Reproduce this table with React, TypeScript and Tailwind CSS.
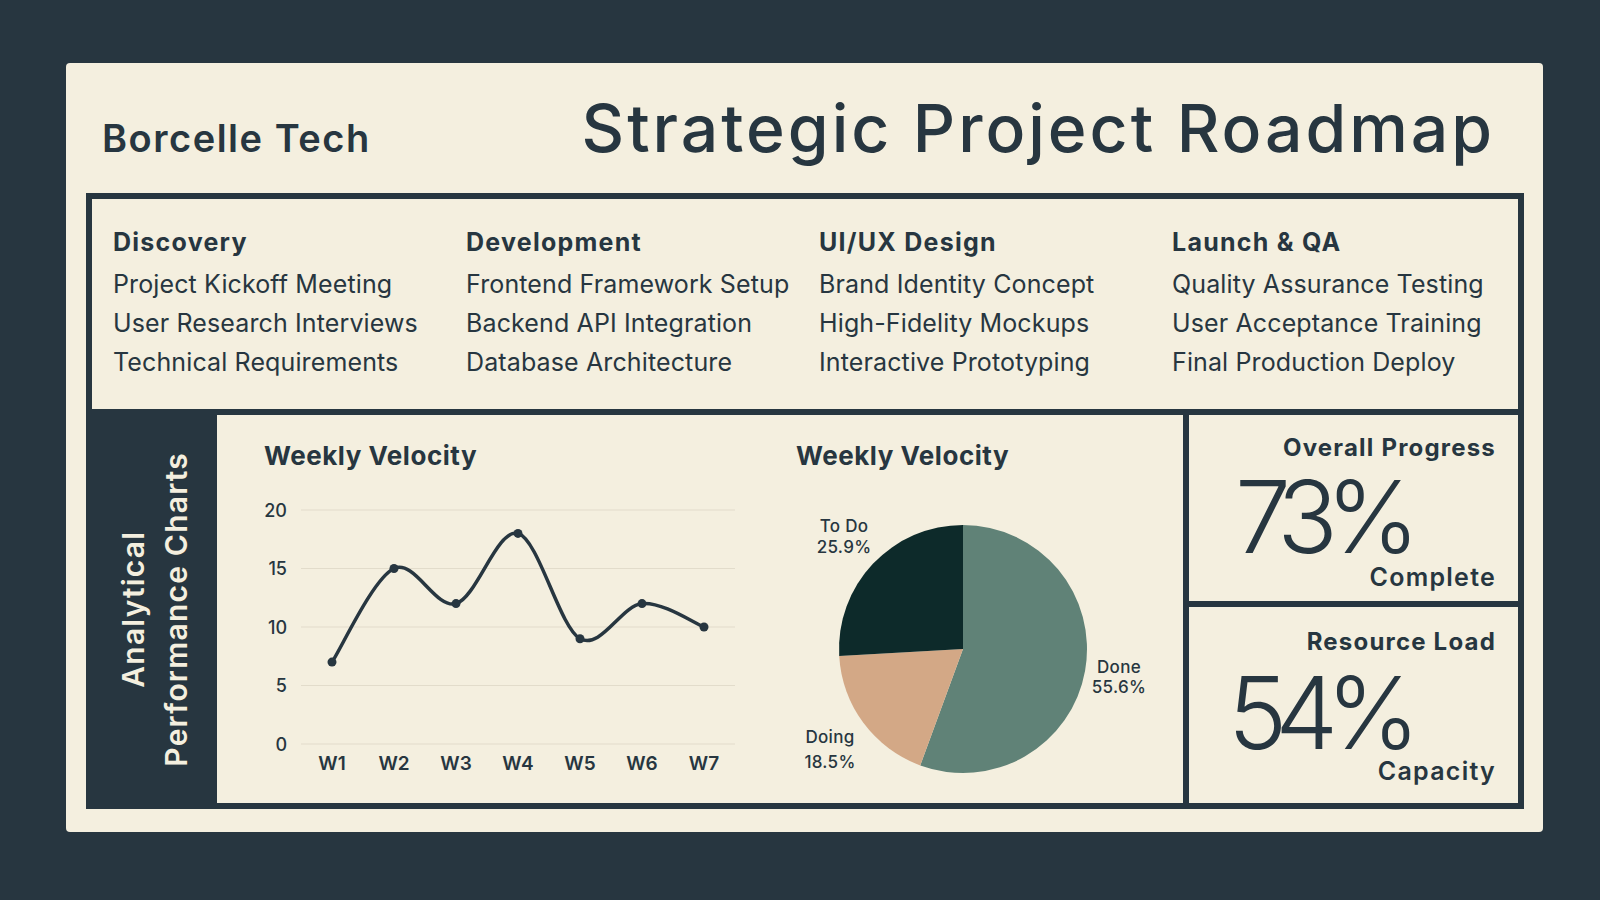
import React from "react";

const phases = [
  { title: "Discovery", items: ["Project Kickoff Meeting", "User Research Interviews", "Technical Requirements"] },
  { title: "Development", items: ["Frontend Framework Setup", "Backend API Integration", "Database Architecture"] },
  { title: "UI/UX Design", items: ["Brand Identity Concept", "High-Fidelity Mockups", "Interactive Prototyping"] },
  { title: "Launch & QA", items: ["Quality Assurance Testing", "User Acceptance Training", "Final Production Deploy"] },
];

const velocity = [7, 15, 12, 18, 9, 12, 10];
const weeks = ["W1", "W2", "W3", "W4", "W5", "W6", "W7"];

const px = (i: number) => 68 + 62 * i;
const py = (v: number) => 254 - v * 11.7;

// catmull-rom -> cubic bezier
function smoothPath(pts: [number, number][]) {
  let d = `M${pts[0][0]},${pts[0][1]}`;
  for (let i = 0; i < pts.length - 1; i++) {
    const p0 = pts[i - 1] || pts[i];
    const p1 = pts[i];
    const p2 = pts[i + 1];
    const p3 = pts[i + 2] || p2;
    const c1x = p1[0] + (p2[0] - p0[0]) / 6;
    const c1y = p1[1] + (p2[1] - p0[1]) / 6;
    const c2x = p2[0] - (p3[0] - p1[0]) / 6;
    const c2y = p2[1] - (p3[1] - p1[1]) / 6;
    d += ` C${c1x.toFixed(1)},${c1y.toFixed(1)} ${c2x.toFixed(1)},${c2y.toFixed(1)} ${p2[0]},${p2[1].toFixed(1)}`;
  }
  return d;
}

function LineChart() {
  const pts = velocity.map((v, i) => [px(i), py(v)] as [number, number]);
  return (
    <svg width="480" height="290" className="mt-[18px] block" style={{ fontFamily: "Inter, sans-serif" }}>
      {[0, 5, 10, 15, 20].map((t) => (
        <g key={t}>
          <line x1="37" x2="471" y1={py(t)} y2={py(t)} stroke="#e2dccb" strokeWidth="1.2" />
          <text x="23" y={py(t)} textAnchor="end" dominantBaseline="central" fontSize="18" fontWeight="500" fill="#273640">
            {t}
          </text>
        </g>
      ))}
      {weeks.map((w, i) => (
        <text key={w} x={px(i)} y="273" textAnchor="middle" dominantBaseline="central" fontSize="19" fontWeight="600" fill="#273640">
          {w}
        </text>
      ))}
      <path d={smoothPath(pts)} fill="none" stroke="#273640" strokeWidth="3.5" strokeLinecap="round" />
      {pts.map(([x, y], i) => (
        <circle key={i} cx={x} cy={y} r="4.5" fill="#273640" />
      ))}
    </svg>
  );
}

function PieChart() {
  return (
    <svg width="360" height="290" className="mt-[18px] -ml-[6px] block" style={{ fontFamily: "Inter, sans-serif" }}>
      <path d="M173,159 L173,35 A124,124 0 1 1 130.26,275.4 Z" fill="#608277" />
      <path d="M173,159 L130.26,275.4 A124,124 0 0 1 49.2,166.01 Z" fill="#d3a886" />
      <path d="M173,159 L49.2,166.01 A124,124 0 0 1 173,35 Z" fill="#0d2a2a" />
      <g fontSize="17" fontWeight="500" fill="#273640" textAnchor="middle" dominantBaseline="central" letterSpacing="0.3">
        <text x="54" y="36">To Do</text>
        <text x="54" y="57">25.9%</text>
        <text x="329" y="177">Done</text>
        <text x="329" y="197">55.6%</text>
        <text x="40" y="247">Doing</text>
        <text x="40" y="272">18.5%</text>
      </g>
    </svg>
  );
}

type StatProps = {
  title: string;
  value: string;
  label: string;
  box: string;
  pl: string;
  numMt: string;
  labelMt: string;
};

function Stat({ title, value, label, box, pl, numMt, labelMt }: StatProps) {
  return (
    <div className={`flex flex-col bg-[#f4efdf] pr-[22px] ${box}`}>
      <div className="text-right text-[24px] leading-[30px] font-bold tracking-[0.05em] text-[#273640]">{title}</div>
      <div className={`${pl} ${numMt} text-[100px] leading-[80px] font-light tracking-[-0.12em] text-[#273640]`}>{value}</div>
      <div className={`${labelMt} text-right text-[25px] leading-[30px] font-semibold tracking-[0.05em] text-[#273640]`}>{label}</div>
    </div>
  );
}

export default function App() {
  return (
    <div
      className="w-[1600px] h-[900px] bg-[#273640] pl-[66px] pt-[63px] overflow-hidden"
      style={{ fontFamily: "Inter, 'Open Sans', sans-serif" }}
    >
      <div className="w-[1477px] h-[769px] rounded-[4px] bg-[#f4efdf] text-[#273640]">
        {/* header */}
        <div className="h-[130px] flex items-baseline justify-between pl-[36px] pr-[48px] pt-[32px]">
          <div className="text-[38px] leading-none font-semibold tracking-[0.04em]">Borcelle Tech</div>
          <div className="text-[66px] leading-none font-medium tracking-[0.045em]">Strategic Project Roadmap</div>
        </div>

        {/* frame */}
        <div className="ml-[20px] w-[1438px] h-[616px] bg-[#273640] p-[6px] flex flex-col gap-[6px]">
          {/* phases */}
          <div className="h-[210px] bg-[#f4efdf] pl-[21px] pt-[28px] grid grid-cols-[repeat(4,353px)]">
            {phases.map((p) => (
              <div key={p.title}>
                <div className="text-[25px] leading-[30px] font-bold tracking-[0.05em]">{p.title}</div>
                <div className="mt-[8px]">
                  {p.items.map((it) => (
                    <div key={it} className="text-[25px] leading-[39px] font-normal tracking-[0.005em] whitespace-nowrap">
                      {it}
                    </div>
                  ))}
                </div>
              </div>
            ))}
          </div>

          {/* analytics */}
          <div className="h-[388px] flex">
            <div className="w-[125px] flex items-center justify-center">
              <div className="[writing-mode:vertical-rl] rotate-180 text-center text-[30px] leading-[43px] font-semibold tracking-[0.04em] text-[#f4efdf]">
                <div>Analytical</div>
                <div>Performance Charts</div>
              </div>
            </div>

            <div className="w-[966px] bg-[#f4efdf] flex">
              <div className="w-[579px] pl-[47px] pt-[25px]">
                <div className="text-[26px] leading-[32px] font-bold tracking-[0.02em]">Weekly Velocity</div>
                <LineChart />
              </div>
              <div className="flex-1 pt-[25px]">
                <div className="text-[26px] leading-[32px] font-bold tracking-[0.02em]">Weekly Velocity</div>
                <PieChart />
              </div>
            </div>

            <div className="ml-[6px] w-[329px] flex flex-col gap-[6px]">
              <div className="h-[186px]">
                <Stat title="Overall Progress" value="73%" label="Complete" box="pt-[18px] h-full" pl="pl-[46px]" numMt="mt-[14px]" labelMt="mt-[5px]" />
              </div>
              <div className="h-[196px]">
                <Stat title="Resource Load" value="54%" label="Capacity" box="pt-[20px] h-full" pl="pl-[39px]" numMt="mt-[16px]" labelMt="mt-[3px]" />
              </div>
            </div>
          </div>
        </div>
      </div>
    </div>
  );
}
